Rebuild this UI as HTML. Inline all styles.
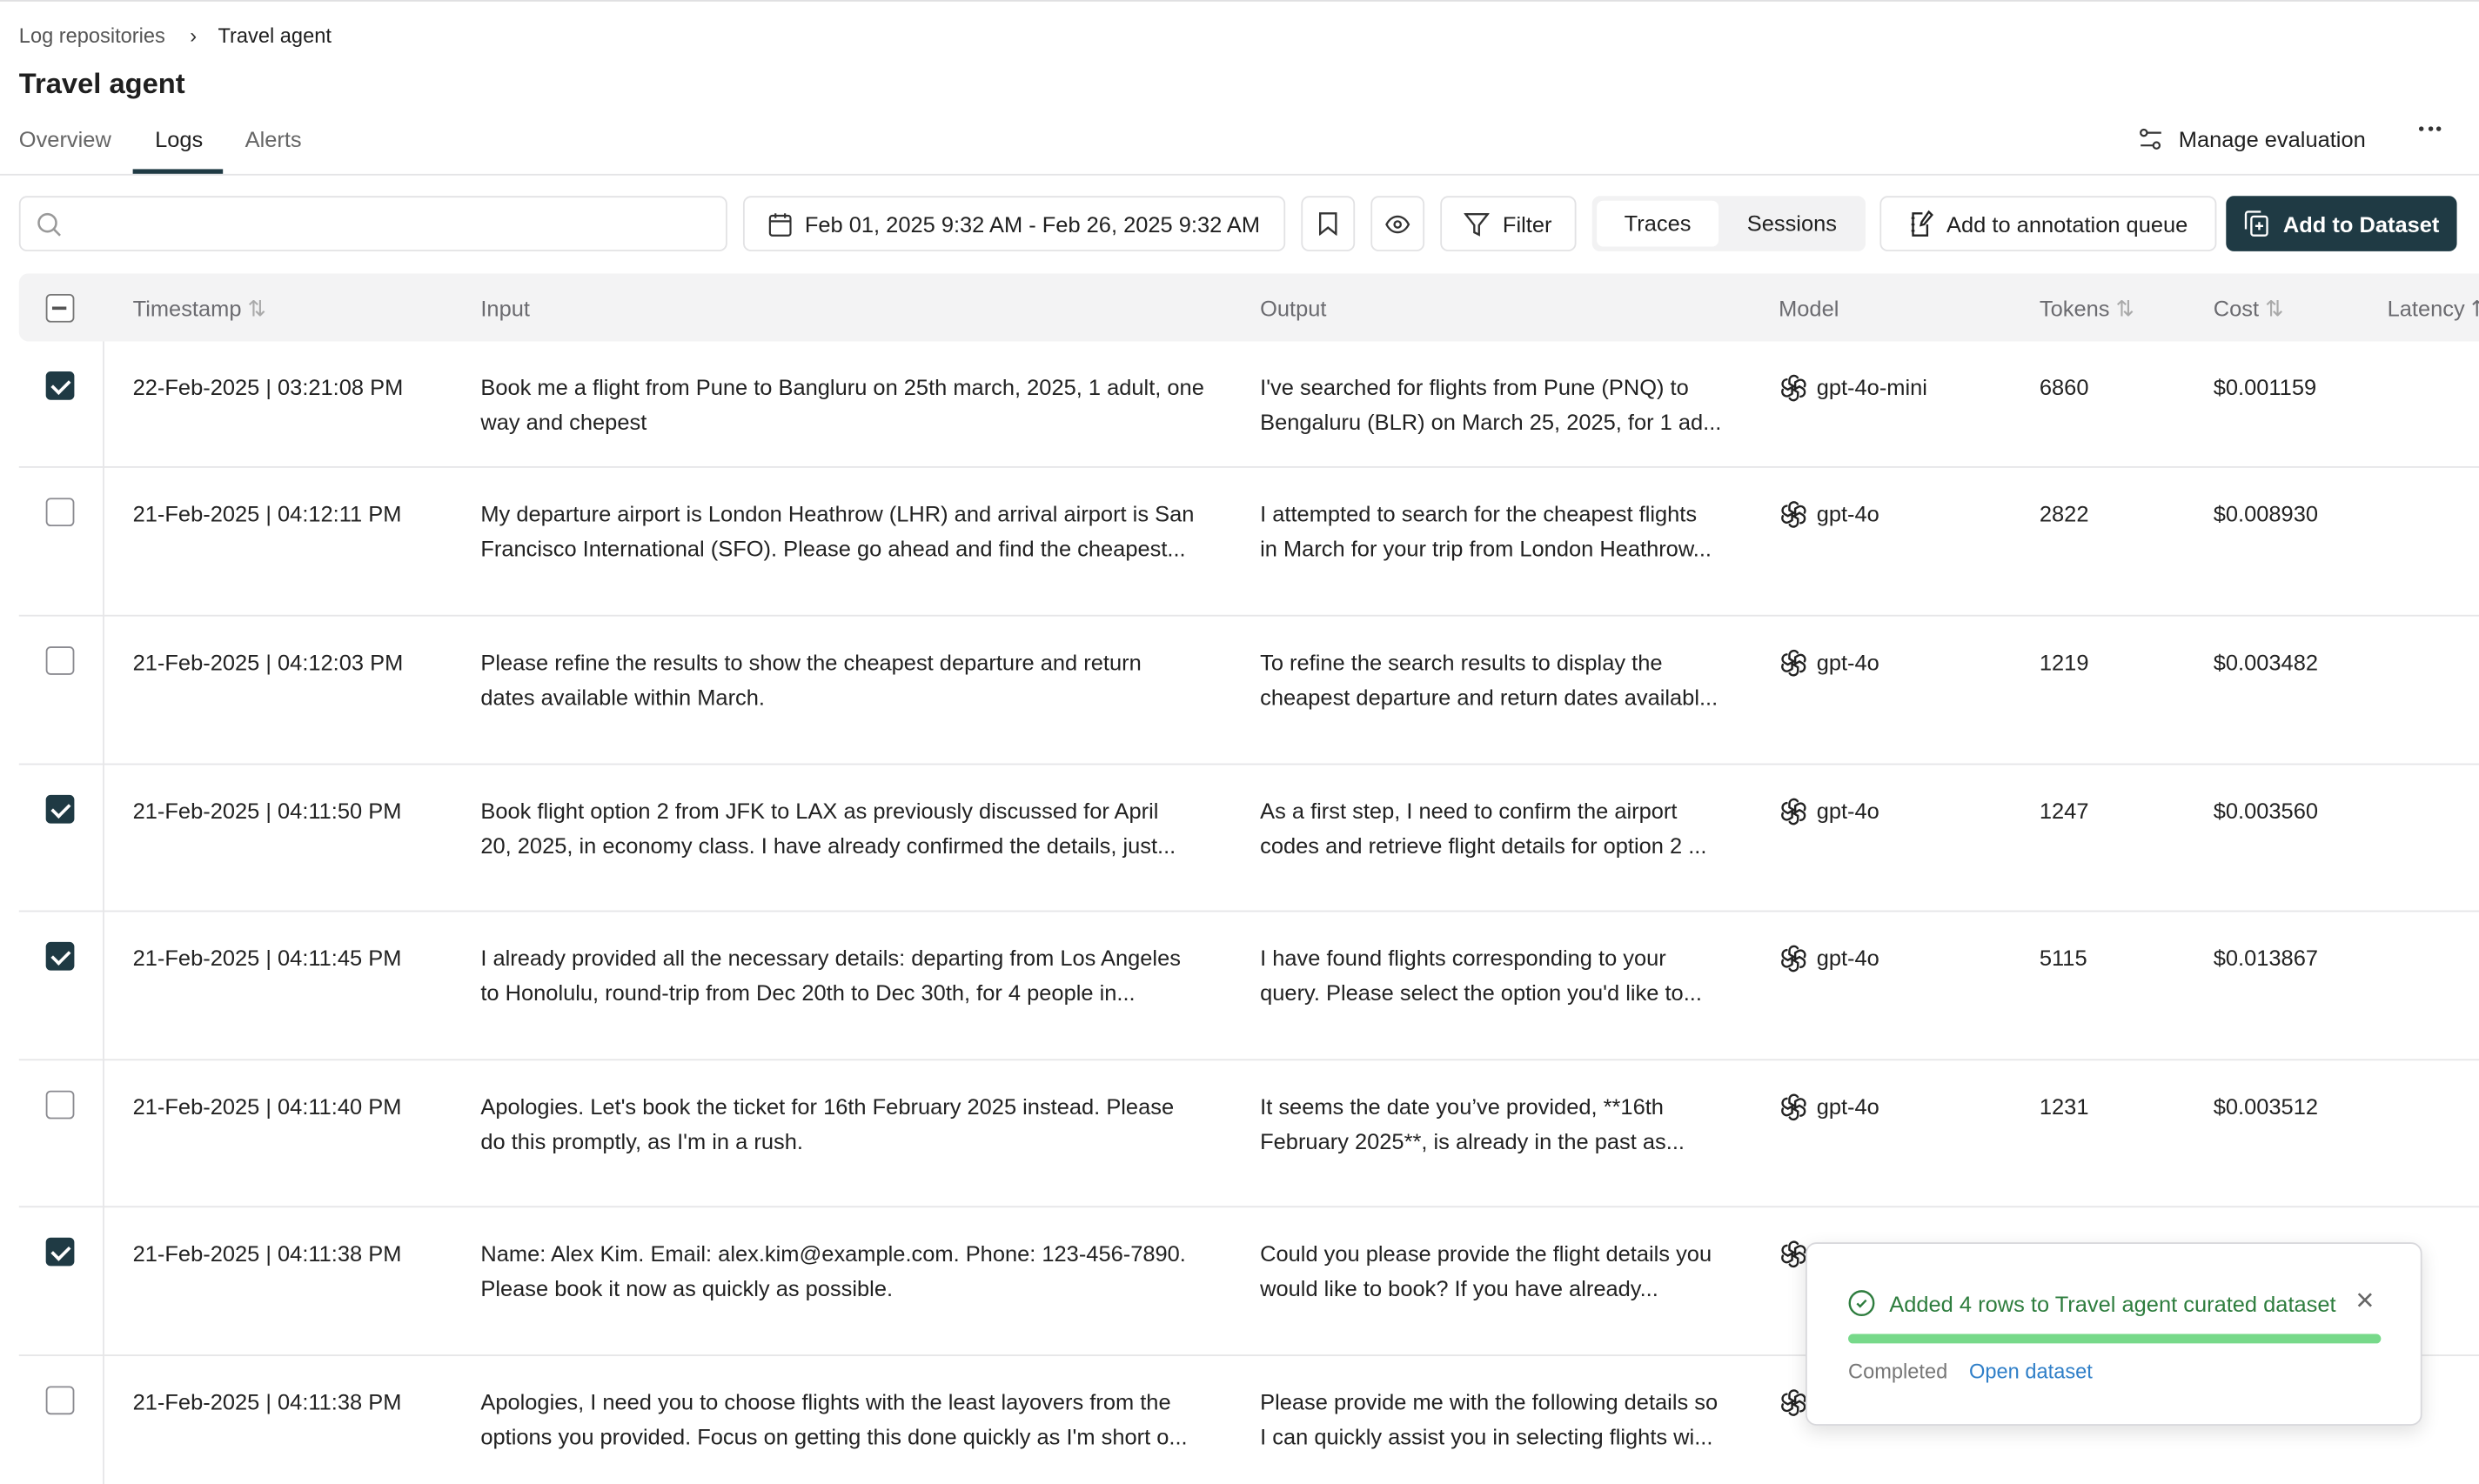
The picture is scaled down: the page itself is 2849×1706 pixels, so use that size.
<!DOCTYPE html>
<html><head><meta charset="utf-8"><style>
*{box-sizing:border-box;margin:0;padding:0}
html,body{width:2849px;height:1706px;overflow:hidden;background:#fff}
#w{width:1568px;height:939px;transform:scale(1.81697);transform-origin:0 0;position:relative;font-family:"Liberation Sans",sans-serif;color:#1f1f1f;font-size:14px}
.a{position:absolute;white-space:nowrap}
.btn{position:absolute;top:124px;height:35px;border:1px solid #e2e2e4;border-radius:5px;background:#fff;display:flex;align-items:center;justify-content:center;gap:8px;font-size:14px}
.cb{position:absolute;left:29px;width:18px;height:18px;border:1.5px solid #8a8a90;border-radius:3px;background:#fff}
.cb.on{background:#1f3a44;border-color:#1f3a44}
.cb.on:after{content:"";position:absolute;left:5px;top:1.5px;width:5px;height:9px;border:solid #fff;border-width:0 2px 2px 0;transform:rotate(45deg)}
.row{position:absolute;left:12px;right:0;border-bottom:1px solid #e6e6e8}
.t{position:absolute;line-height:22px;font-size:14px;color:#222;white-space:nowrap}
.h{position:absolute;top:187px;font-size:14px;color:#6b6b70;white-space:nowrap}
</style></head><body><div id="w">
<div class="a" style="left:0;top:0;width:1568px;height:1px;background:#e0e0e2"></div>
<div class="a" style="left:12px;top:15px;font-size:13px;color:#555">Log repositories <span style="margin:0 10px 0 12px;color:#333">›</span> <span style="color:#1f1f1f">Travel agent</span></div>
<div class="a" style="left:12px;top:43px;font-size:18px;font-weight:bold">Travel agent</div>
<div class="a" style="left:12px;top:80px;font-size:14px;color:#666">Overview</div>
<div class="a" style="left:98px;top:80px;font-size:14px;color:#1f1f1f">Logs</div>
<div class="a" style="left:155px;top:80px;font-size:14px;color:#666">Alerts</div>
<div class="a" style="left:84px;top:107px;width:57px;height:3px;background:#1f3a44"></div>
<div class="a" style="left:0;top:110px;width:1568px;height:1px;background:#e4e4e6"></div>
<div class="a" style="left:1353px;top:80px;font-size:14px;display:flex;align-items:center;gap:10px"><svg width="15" height="15" viewBox="0 0 15 15" fill="none" stroke="#333" stroke-width="1.2"><circle cx="3" cy="3" r="2"/><path d="M5 3h9M1 11h8"/><circle cx="11" cy="11" r="2"/></svg>Manage evaluation</div>
<div class="a" style="left:1530px;top:80px;display:flex;gap:2.5px"><i style="width:3px;height:3px;border-radius:50%;background:#333"></i><i style="width:3px;height:3px;border-radius:50%;background:#333"></i><i style="width:3px;height:3px;border-radius:50%;background:#333"></i></div>

<div class="btn" style="left:12px;width:448px;justify-content:flex-start;padding-left:10px"><svg width="16" height="16" viewBox="0 0 16 16" fill="none" stroke="#999" stroke-width="1.4"><circle cx="7" cy="7" r="5.5"/><path d="M11 11l4 4"/></svg></div>
<div class="btn" style="left:470px;width:343px"><svg width="15" height="16" viewBox="0 0 15 16" fill="none" stroke="#333" stroke-width="1.2"><rect x="1" y="2.5" width="13" height="12.5" rx="1.5"/><path d="M1 6h13M4.5 1v3M10.5 1v3"/></svg>Feb 01, 2025 9:32 AM - Feb 26, 2025 9:32 AM</div>
<div class="btn" style="left:823px;width:34px"><svg width="12" height="15" viewBox="0 0 12 15" fill="none" stroke="#333" stroke-width="1.3"><path d="M1 1h10v13l-5-4-5 4z"/></svg></div>
<div class="btn" style="left:867px;width:34px"><svg width="16" height="12" viewBox="0 0 16 12" fill="none" stroke="#333" stroke-width="1.3"><path d="M1 6c2-4 5-5 7-5s5 1 7 5c-2 4-5 5-7 5s-5-1-7-5z"/><circle cx="8" cy="6" r="2"/></svg></div>
<div class="btn" style="left:911px;width:86px"><svg width="16" height="16" viewBox="0 0 16 16" fill="none" stroke="#333" stroke-width="1.3"><path d="M1 1.5h14l-5.5 7v6l-3 -1.5v-4.5z"/></svg>Filter</div>
<div class="a" style="left:1007px;top:124px;width:173px;height:35px;background:#f2f2f3;border-radius:5px"></div>
<div class="a" style="left:1010px;top:127px;width:77px;height:29px;background:#fff;border-radius:4px;text-align:center;line-height:29px">Traces</div>
<div class="a" style="left:1105px;top:127px;line-height:29px">Sessions</div>
<div class="btn" style="left:1189px;width:213px"><svg width="16" height="17" viewBox="0 0 16 17" fill="none" stroke="#222" stroke-width="1.3"><path d="M9 2H3v14h9V9M2 5h2M2 9h2M2 13h2"/><path d="M13 1l2 2-5 6-2 .5.5-2z"/></svg>Add to annotation queue</div>
<div class="btn" style="left:1408px;width:146px;background:#1f3a44;border-color:#1f3a44;color:#fff;font-weight:bold"><svg width="17" height="17" viewBox="0 0 17 17" fill="none" stroke="#fff" stroke-width="1.3"><rect x="5" y="4" width="10" height="12" rx="1.5"/><path d="M11 1H3a1.5 1.5 0 0 0-1.5 1.5V12M10 7.5v5M7.5 10h5"/></svg>Add to Dataset</div>

<div class="a" style="left:12px;top:173px;width:1556px;height:43px;background:#f3f3f4;border-radius:6px 0 0 6px"></div>
<div class="cb" style="top:186px;border-color:#777"><div style="position:absolute;left:3px;top:7px;width:9px;height:1.5px;background:#555"></div></div>
<div class="h" style="left:84px">Timestamp <span style="color:#aaa">⇅</span></div>
<div class="h" style="left:304px">Input</div>
<div class="h" style="left:797px">Output</div>
<div class="h" style="left:1125px">Model</div>
<div class="h" style="left:1290px">Tokens <span style="color:#aaa">⇅</span></div>
<div class="h" style="left:1400px">Cost <span style="color:#aaa">⇅</span></div>
<div class="h" style="left:1510px">Latency ⇅</div>
<div class="a" style="left:65px;top:216px;width:1px;height:723px;background:#e6e6e8"></div>

<div id="rows"></div>
<script>
var g='';for(var k=0;k<6;k++)g+='<path transform="rotate('+(k*60)+' 12 12)" d="M8.6 8.6V5.8a3.6 3.6 0 0 1 6.6-2 M8.6 8.6l4.6 2.7"/>';
var o='<svg width="19" height="19" viewBox="0 0 24 24" fill="none" stroke="#222" stroke-width="1.7" stroke-linecap="round">'+g+'</svg>';
var R=[[216,80,1,"22-Feb-2025 | 03:21:08 PM","Book me a flight from Pune to Bangluru on 25th march, 2025, 1 adult, one","way and chepest","I've searched for flights from Pune (PNQ) to","Bengaluru (BLR) on March 25, 2025, for 1 ad...","gpt-4o-mini","6860","$0.001159"],
[296,94,0,"21-Feb-2025 | 04:12:11 PM","My departure airport is London Heathrow (LHR) and arrival airport is San","Francisco International (SFO). Please go ahead and find the cheapest...","I attempted to search for the cheapest flights","in March for your trip from London Heathrow...","gpt-4o","2822","$0.008930"],
[390,94,0,"21-Feb-2025 | 04:12:03 PM","Please refine the results to show the cheapest departure and return","dates available within March.","To refine the search results to display the","cheapest departure and return dates availabl...","gpt-4o","1219","$0.003482"],
[484,93,1,"21-Feb-2025 | 04:11:50 PM","Book flight option 2 from JFK to LAX as previously discussed for April","20, 2025, in economy class. I have already confirmed the details, just...","As a first step, I need to confirm the airport","codes and retrieve flight details for option 2 ...","gpt-4o","1247","$0.003560"],
[577,94,1,"21-Feb-2025 | 04:11:45 PM","I already provided all the necessary details: departing from Los Angeles","to Honolulu, round-trip from Dec 20th to Dec 30th, for 4 people in...","I have found flights corresponding to your","query. Please select the option you'd like to...","gpt-4o","5115","$0.013867"],
[671,93,0,"21-Feb-2025 | 04:11:40 PM","Apologies. Let's book the ticket for 16th February 2025 instead. Please","do this promptly, as I'm in a rush.","It seems the date you’ve provided, **16th","February 2025**, is already in the past as...","gpt-4o","1231","$0.003512"],
[764,94,1,"21-Feb-2025 | 04:11:38 PM","Name: Alex Kim. Email: alex.kim@example.com. Phone: 123-456-7890.","Please book it now as quickly as possible.","Could you please provide the flight details you","would like to book? If you have already...","","",""],
[858,94,0,"21-Feb-2025 | 04:11:38 PM","Apologies, I need you to choose flights with the least layovers from the","options you provided. Focus on getting this done quickly as I'm short o...","Please provide me with the following details so","I can quickly assist you in selecting flights wi...","","",""]];
var h='';R.forEach(function(r){var y=r[0],ty=y+18;
h+='<div class="row" style="top:'+y+'px;height:'+r[1]+'px"></div>';
h+='<div class="cb'+(r[2]?' on':'')+'" style="top:'+(y+19)+'px"></div>';
h+='<div class="t" style="left:84px;top:'+ty+'px">'+r[3]+'</div>';
h+='<div class="t" style="left:304px;top:'+ty+'px">'+r[4]+'<br>'+r[5]+'</div>';
h+='<div class="t" style="left:797px;top:'+ty+'px">'+r[6]+'<br>'+r[7]+'</div>';
h+='<div class="t" style="left:1125px;top:'+ty+'px;display:flex;align-items:center;gap:5px;height:22px">'+o+r[8]+'</div>';
h+='<div class="t" style="left:1290px;top:'+ty+'px">'+r[9]+'</div>';
h+='<div class="t" style="left:1400px;top:'+ty+'px">'+r[10]+'</div>';});
document.getElementById('rows').innerHTML=h;
</script>

<div class="a" style="left:1142px;top:786px;width:390px;height:116px;background:#fff;border:1px solid #d8d8dc;border-radius:7px;box-shadow:0 4px 12px rgba(0,0,0,.12)">
<div class="a" style="left:26px;top:29px;display:flex;align-items:center;gap:9px;color:#2e7d3e;font-size:14px"><svg width="17" height="17" viewBox="0 0 18 18" fill="none" stroke="#2e7d3e" stroke-width="1.4"><circle cx="9" cy="9" r="8"/><path d="M6 9.2l2 2 4-4.2"/></svg>Added 4 rows to Travel agent curated dataset</div>
<div class="a" style="left:347px;top:26px;font-size:20px;color:#666;line-height:20px">×</div>
<div class="a" style="left:26px;top:57px;width:337px;height:6px;border-radius:3px;background:#77d98a"></div>
<div class="a" style="left:26px;top:73px;font-size:13px;color:#777">Completed <span style="color:#2f7fc8;margin-left:10px">Open dataset</span></div>
</div>
</div></body></html>
